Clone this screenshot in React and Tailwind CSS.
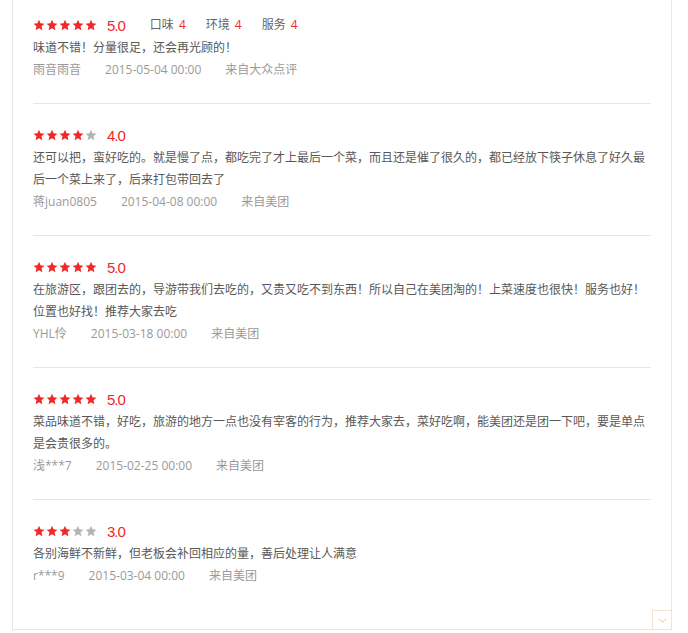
import { ChevronDown } from 'lucide-react'

const reviews = [
  {
    rating: 5,
    score: '5.0',
    sub: [['口味', 4], ['环境', 4], ['服务', 4]],
    text: '味道不错！分量很足，还会再光顾的！',
    user: '雨音雨音',
    date: '2015-05-04 00:00',
    source: '来自大众点评',
  },
  {
    rating: 4,
    score: '4.0',
    text: '还可以把，蛮好吃的。就是慢了点，都吃完了才上最后一个菜，而且还是催了很久的，都已经放下筷子休息了好久最后一个菜上来了，后来打包带回去了',
    user: '蒋juan0805',
    date: '2015-04-08 00:00',
    source: '来自美团',
  },
  {
    rating: 5,
    score: '5.0',
    text: '在旅游区，跟团去的，导游带我们去吃的，又贵又吃不到东西！所以自己在美团淘的！上菜速度也很快！服务也好！位置也好找！推荐大家去吃',
    user: 'YHL伶',
    date: '2015-03-18 00:00',
    source: '来自美团',
  },
  {
    rating: 5,
    score: '5.0',
    text: '菜品味道不错，好吃，旅游的地方一点也没有宰客的行为，推荐大家去，菜好吃啊，能美团还是团一下吧，要是单点是会贵很多的。',
    user: '浅***7',
    date: '2015-02-25 00:00',
    source: '来自美团',
  },
  {
    rating: 3,
    score: '3.0',
    text: '各别海鲜不新鲜，但老板会补回相应的量，善后处理让人满意',
    user: 'r***9',
    date: '2015-03-04 00:00',
    source: '来自美团',
  },
]

function Star({ on }) {
  return (
    <svg width="12" height="12" viewBox="0 0 24 24">
      <path
        d="M12 1.5l3.1 7.2 7.8.7-5.9 5.2 1.8 7.7L12 18.3l-6.8 4 1.8-7.7-5.9-5.2 7.8-.7z"
        fill={on ? '#f02828' : '#b4b4b4'}
      />
    </svg>
  )
}

function Review({ r, first, last }) {
  return (
    <div className={`${first ? 'pt-[14px]' : 'pt-[20px]'} pb-[22px] ${last ? '' : 'border-b border-[#e6e6e6]'}`}>
      {/* rating line */}
      <div className="flex items-center h-[22px]">
        <div className="flex gap-[1px]">
          {[1, 2, 3, 4, 5].map((i) => (
            <Star key={i} on={i <= r.rating} />
          ))}
        </div>
        <span className="ml-[10px] text-[15px] leading-none tracking-[-1px] text-[#f02828] font-['Liberation_Sans',sans-serif]">
          {r.score}
        </span>
        {r.sub && (
          <div className="flex ml-[25px] gap-[20px] text-[12px] text-[#666]">
            {r.sub.map(([k, v]) => (
              <span key={k}>
                {k}<span className="ml-[5px] text-[#f02828]">{v}</span>
              </span>
            ))}
          </div>
        )}
      </div>

      <p className="mt-[1px] text-[12px] leading-[22px] text-[#585858]">{r.text}</p>

      <div className="flex gap-[24px] text-[12px] leading-[22px] text-[#9a9a9a]">
        <span>{r.user}</span>
        <span>{r.date}</span>
        <span>{r.source}</span>
      </div>
    </div>
  )
}

export default function App() {
  return (
    <div className="w-[688px] h-[633px] bg-white font-['Open_Sans','Noto_Sans_CJK_SC',sans-serif]">
      <div className="relative ml-[12px] w-[660px] border-x border-b border-[#e6e6e6] px-[20px] pb-[20px]">
        {reviews.map((r, i) => (
          <Review key={i} r={r} first={i === 0} last={i === reviews.length - 1} />
        ))}

        {/* expand toggle */}
        <div className="absolute right-0 bottom-0 w-[19px] h-[19px] border-l border-t border-[#f6e2cf] flex items-center justify-center">
          <ChevronDown size={13} strokeWidth={1.25} color="#f0a050" />
        </div>
      </div>
    </div>
  )
}
